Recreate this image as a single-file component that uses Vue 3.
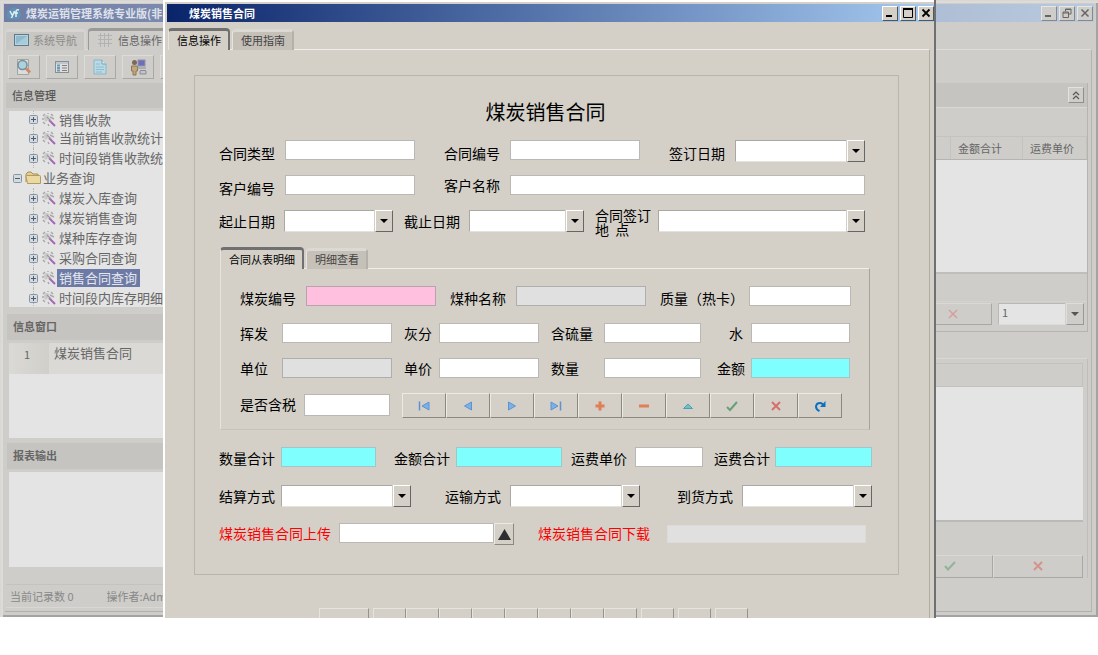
<script setup>
import { ref } from 'vue'

const tree = [
  { text: '销售收款' },
  { text: '当前销售收款统计' },
  { text: '时间段销售收款统' },
  { text: '业务查询', folder: true },
  { text: '煤炭入库查询' },
  { text: '煤炭销售查询' },
  { text: '煤种库存查询' },
  { text: '采购合同查询' },
  { text: '销售合同查询', selected: true },
  { text: '时间段内库存明细' },
]

const headRows = [
  { cls: 'r-type', fields: [
    { id: 'type', label: '合同类型' },
    { id: 'no', label: '合同编号' },
    { id: 'signDate', label: '签订日期', combo: true },
  ] },
  { cls: 'r-client', fields: [
    { id: 'clientNo', label: '客户编号' },
    { id: 'clientName', label: '客户名称' },
  ] },
  { cls: 'r-dates', fields: [
    { id: 'start', label: '起止日期', combo: true },
    { id: 'end', label: '截止日期', combo: true },
    { id: 'place', label: '合同签订\n地  点', combo: true },
  ] },
]

const detailRows = [
  { cls: 'r-coal', fields: [
    { id: 'coalNo', label: '煤炭编号', tone: 'pink' },
    { id: 'coalName', label: '煤种名称', tone: 'grey' },
    { id: 'heat', label: '质量（热卡）' },
  ] },
  { cls: 'r-four r-first', fields: [
    { id: 'volatile', label: '挥发' },
    { id: 'ash', label: '灰分' },
    { id: 'sulfur', label: '含硫量' },
    { id: 'water', label: '水' },
  ] },
  { cls: 'r-four', fields: [
    { id: 'unit', label: '单位', tone: 'grey' },
    { id: 'price', label: '单价' },
    { id: 'qty', label: '数量' },
    { id: 'amount', label: '金额', tone: 'cyan' },
  ] },
]

const footRows = [
  { cls: 'r-sum', fields: [
    { id: 'qtySum', label: '数量合计', tone: 'cyan' },
    { id: 'amountSum', label: '金额合计', tone: 'cyan' },
    { id: 'freight', label: '运费单价' },
    { id: 'freightSum', label: '运费合计', tone: 'cyan' },
  ] },
  { cls: 'r-mode', fields: [
    { id: 'settle', label: '结算方式', combo: true },
    { id: 'ship', label: '运输方式', combo: true },
    { id: 'arrive', label: '到货方式', combo: true },
  ] },
]

const values = ref({})

const nav = [
  { name: 'first', title: '首条' },
  { name: 'prev', title: '上一条' },
  { name: 'next', title: '下一条' },
  { name: 'last', title: '末条' },
  { name: 'add', title: '新增' },
  { name: 'remove', title: '删除' },
  { name: 'edit', title: '编辑' },
  { name: 'ok', title: '确定' },
  { name: 'cancel', title: '取消' },
  { name: 'refresh', title: '刷新' },
]
</script>

<template>
  <div class="stage">
    <div class="back">
      <header class="bar bar-dim">
        <svg class="logo" viewBox="0 0 16 14" width="16" height="14">
          <path d="M2 12Q0 10 1 7Q2 4 4 4Q6 0 10 2Q13 2 14 6Q16 8 14 11L12 13H4Z" fill="#5c93b4" />
          <path d="M4 5L6 9M8.500 5L5.500 12M13 4Q10 3 10 6V11M8.500 7H12" stroke="#e8eef2" stroke-width="1.500" fill="none" />
        </svg>
        <span class="bar-text">煤炭运销管理系统专业版(非</span>
        <span class="wbtns dim">
          <button type="button" class="wbtn" aria-label="最小化"><svg viewBox="0 0 10 10"><path d="M1 8H7" stroke="#666" stroke-width="2" /></svg></button>
          <button type="button" class="wbtn gapped" aria-label="还原"><svg viewBox="0 0 10 10"><path d="M3.500 3.500V1H9V6H7M1 4H6.500V9.500H1ZM1 5H6.500M3.500 1.500H9" stroke="#666" fill="none" /></svg></button>
          <button type="button" class="wbtn gapped" aria-label="关闭"><svg viewBox="0 0 10 10"><path d="M1.500 1.500L8.500 8.500M8.500 1.500L1.500 8.500" stroke="#666" stroke-width="1.500" /></svg></button>
        </span>
      </header>

      <nav class="tabs tabs-dim">
        <button type="button" class="tab off">
          <svg viewBox="0 0 15 12" width="15" height="12"><rect x=".5" y=".5" width="14" height="11" fill="#b9d3de" stroke="#5a7a8d" /><path d="M2 2H13V10H2Z" fill="#8fb9cd" /><path d="M2 10L13 2V10Z" fill="#a8cbd9" /></svg>
          系统导航
        </button>
        <button type="button" class="tab on">
          <svg viewBox="0 0 14 14" width="14" height="14"><path d="M2.500 0V14M6.500 0V14M10.500 0V14M0 2.500H14M0 6.500H14M0 10.500H14" stroke="#b3b2b0" stroke-width="1" fill="none" /></svg>
          信息操作
        </button>
      </nav>

      <div class="body">
        <aside class="side">
          <div class="tools">
            <button type="button" class="tool" aria-label="查找"><svg viewBox="0 0 18 18" width="18" height="18"><path d="M2.500 1.500H13.500V16.500H2.500Z" fill="#dadddd" stroke="#a2a5a6" /><circle cx="7.500" cy="7" r="4.500" fill="#a9d3df" stroke="#7d8c95" stroke-width="1.500" /><path d="M11 10.500L15 14.500" stroke="#cf8967" stroke-width="3" /></svg></button>
            <button type="button" class="tool" aria-label="列表"><svg viewBox="0 0 14 14" width="14" height="14"><rect x=".5" y="1.500" width="13" height="11" fill="#dedede" stroke="#8a8f93" /><path d="M1 3H13" stroke="#a0b0ba" /><path d="M2 5.500H5M2 8H5M2 10.500H5" stroke="#6d9ab5" stroke-width="2" /><path d="M7 5.500H12M7 8H12M7 10.500H12" stroke="#808080" /></svg></button>
            <button type="button" class="tool" aria-label="新建"><svg viewBox="0 0 14 16" width="14" height="16"><path d="M1 1H9L13 5V15H1Z" fill="#b9dbe7" stroke="#8fb4c4" /><path d="M9 1V5H13" fill="#dcebf0" stroke="#7d9fb0" /><path d="M3 5H7M3 8H11M3 10.500H11M3 13H9" stroke="#8fbccd" /></svg></button>
            <button type="button" class="tool" aria-label="用户"><svg viewBox="0 0 18 18" width="18" height="18"><circle cx="5.500" cy="4.500" r="2.500" fill="#7b6a58" /><path d="M2.500 8H8.500V13H7V17H4V13H2.500Z" fill="#c3a67a" stroke="#8b7657" /><rect x="9" y="2" width="7" height="6" fill="#6d70b8" stroke="#9093ad" /><path d="M8 10H17M11 12.500H17M11 13V16H17V13" stroke="#8a8d95" fill="#c2c4c8" /></svg></button>
            <button type="button" class="tool" aria-label="更多"></button>
          </div>
          <h2 class="head">信息管理</h2>
          <div class="tree">
            <ul>
              <li v-for="n in tree" :key="n.text" :class="{ folder: n.folder, selected: n.selected }">
                <svg class="pm" viewBox="0 0 9 9" width="9" height="9"><rect x=".5" y=".5" width="8" height="8" rx="1" fill="#d5dae0" stroke="#8795a5" /><path d="M2 4.500H7" stroke="#4c5c70" /><path v-if="!n.folder" d="M4.500 2V7" stroke="#4c5c70" /></svg>
                <svg v-if="n.folder" class="fold" viewBox="0 0 16 14" width="16" height="14"><path d="M1 11V3L3 1H6L8 3H13V5" fill="#e3cc91" stroke="#a88f56" /><path d="M2.500 12.500L1 5.500Q1 4.500 2 4.500H14.500Q15.500 4.500 15.500 5.500V12.500Z" fill="#ead9a0" stroke="#b39a5d" /></svg>
                <svg v-else class="gear" viewBox="0 0 14 14" width="14" height="14"><path d="M2 5Q2 2 5 2L8 3Q5 4 6 7L4 9Q2 8 2 5Z" fill="#c9c9c9" /><path d="M1 3L3 1M5 0H7M9 1L11 3M0 6H2M1 9L3 11M6 11L7 13M8 4L12 6" stroke="#a9a9a9" stroke-width="1.500" /><path d="M7 7L13 13" stroke="#a566b8" stroke-width="2" /><path d="M5 4L9 8" stroke="#9a9a9a" stroke-width="1.500" /></svg>
                <span>{{ n.text }}</span>
              </li>
            </ul>
          </div>
          <h2 class="head head-info">信息窗口</h2>
          <div class="pane">
            <table class="list"><tbody><tr><th scope="row">1</th><td>煤炭销售合同</td></tr></tbody></table>
          </div>
          <h2 class="head head-report">报表输出</h2>
          <div class="pane"></div>
          <footer class="status"><span>当前记录数 0</span><span>操作者:Adm</span></footer>
        </aside>

        <main class="work">
          <section class="panel">
            <div class="phead">
              <button type="button" class="fold-btn" aria-label="收起"><svg viewBox="0 0 8 9" width="8" height="9"><path d="M1 4L4 1L7 4M1 8L4 5L7 8" stroke="#555" fill="none" stroke-width="1.200" /></svg></button>
            </div>
            <table class="grid">
              <thead><tr><th></th><th class="c1">金额合计</th><th class="c2">运费单价</th></tr></thead>
              <tbody><tr><td></td><td></td><td></td></tr></tbody>
            </table>
            <div class="pager">
              <button type="button" class="flat" aria-label="取消"><svg viewBox="0 0 10 10" width="10" height="10"><path d="M1 1L9 9M9 1L1 9" stroke="#d3a09b" stroke-width="1.500" /></svg></button>
              <span class="combo combo-dim">
                <select aria-label="页码"><option>1</option></select>
                <span class="arrow"><svg viewBox="0 0 8 4" width="8" height="4"><path d="M0 0H8L4 4Z" fill="#555" /></svg></span>
              </span>
            </div>
          </section>
          <section class="panel2">
            <div class="p2head"></div>
            <div class="p2body"></div>
            <div class="p2btns">
              <button type="button" class="flat okb" aria-label="确定"><svg viewBox="0 0 12 10" width="12" height="10"><path d="M1 5L4 8.500L11 1" stroke="#91b39a" stroke-width="2" fill="none" /></svg></button>
              <button type="button" class="flat nob" aria-label="关闭"><svg viewBox="0 0 10 10" width="10" height="10"><path d="M1 1L9 9M9 1L1 9" stroke="#d5938c" stroke-width="2" /></svg></button>
            </div>
          </section>
        </main>
      </div>
    </div>

    <div class="dialog" role="dialog" aria-label="煤炭销售合同">
      <header class="bar">
        <span class="bar-text">煤炭销售合同</span>
        <span class="wbtns">
          <button type="button" class="wbtn" aria-label="最小化"><svg viewBox="0 0 10 10"><path d="M1 8H7" stroke="#000" stroke-width="2" /></svg></button>
          <button type="button" class="wbtn gapped" aria-label="最大化"><svg viewBox="0 0 10 10"><path d="M.5 1V9.500H9.500V1M0 1H10" stroke="#000" fill="none" /><path d="M0 1H10" stroke="#000" stroke-width="2" /></svg></button>
          <button type="button" class="wbtn gapped" aria-label="关闭"><svg viewBox="0 0 10 10"><path d="M1.500 1.500L8.500 8.500M8.500 1.500L1.500 8.500" stroke="#000" stroke-width="1.800" /></svg></button>
        </span>
      </header>
      <nav class="tabs">
        <button type="button" class="tab on">信息操作</button>
        <button type="button" class="tab off">使用指南</button>
      </nav>
      <div class="page">
        <form class="sheet" @submit.prevent>
          <h1>煤炭销售合同</h1>

          <div v-for="r in headRows" :key="r.cls" class="row" :class="r.cls">
            <div v-for="f in r.fields" :key="f.id" class="field">
              <label :for="f.id">{{ f.label }}</label>
              <span v-if="f.combo" class="combo">
                <select :id="f.id" v-model="values[f.id]"></select>
                <span class="arrow"><svg viewBox="0 0 8 4" width="8" height="4"><path d="M0 0H8L4 4Z" /></svg></span>
              </span>
              <input v-else :id="f.id" v-model="values[f.id]" type="text">
            </div>
          </div>

          <nav class="tabs subtabs">
            <button type="button" class="tab on">合同从表明细</button>
            <button type="button" class="tab off">明细查看</button>
          </nav>
          <section class="detail">
            <div v-for="r in detailRows" :key="r.cls" class="row" :class="r.cls">
              <div v-for="f in r.fields" :key="f.id" class="field" :class="'f-' + f.id">
                <label :for="f.id">{{ f.label }}</label>
                <input :id="f.id" v-model="values[f.id]" type="text" :class="f.tone">
              </div>
            </div>
            <div class="row r-tax">
              <div class="field">
                <label for="tax">是否含税</label>
                <input id="tax" v-model="values.tax" type="text">
              </div>
              <div class="navigator">
                <button v-for="b in nav" :key="b.name" type="button" :aria-label="b.title">
                  <svg viewBox="0 0 12 12" width="12" height="12">
                    <g v-if="b.name === 'first'"><path d="M1.500 1.500V10.500" stroke="#5d93cf" stroke-width="1.500" /><path d="M11 2V10L4 6Z" fill="#7db0e6" stroke="#5d93cf" /></g>
                    <path v-else-if="b.name === 'prev'" d="M9.500 2V10L2.500 6Z" fill="#7db0e6" stroke="#5d93cf" />
                    <path v-else-if="b.name === 'next'" d="M2.500 2V10L9.500 6Z" fill="#7db0e6" stroke="#5d93cf" />
                    <g v-else-if="b.name === 'last'"><path d="M10.500 1.500V10.500" stroke="#5d93cf" stroke-width="1.500" /><path d="M1 2V10L8 6Z" fill="#7db0e6" stroke="#5d93cf" /></g>
                    <path v-else-if="b.name === 'add'" d="M6 1.500V10.500M1.500 6H10.500" stroke="#e07f55" stroke-width="3" />
                    <path v-else-if="b.name === 'remove'" d="M1 6H11" stroke="#e07f55" stroke-width="3" />
                    <path v-else-if="b.name === 'edit'" d="M1.500 8.500L6 4L10.500 8.500Z" fill="#6fc0cc" stroke="#4f9faf" />
                    <path v-else-if="b.name === 'ok'" d="M1 7L4 10L11 2" stroke="#6a9f76" stroke-width="2" fill="none" />
                    <path v-else-if="b.name === 'cancel'" d="M2 2L10 10M10 2L2 10" stroke="#d4706a" stroke-width="2" />
                    <g v-else><path d="M5.500 11Q2 9.500 2 6.500Q2.500 3 6 3Q8 3 9.500 5" stroke="#0a70bf" stroke-width="2" fill="none" /><path d="M11.500 1V7H6Z" fill="#0a70bf" /></g>
                  </svg>
                </button>
              </div>
            </div>
          </section>

          <div v-for="r in footRows" :key="r.cls" class="row" :class="r.cls">
            <div v-for="f in r.fields" :key="f.id" class="field">
              <label :for="f.id">{{ f.label }}</label>
              <span v-if="f.combo" class="combo">
                <select :id="f.id" v-model="values[f.id]"></select>
                <span class="arrow"><svg viewBox="0 0 8 4" width="8" height="4"><path d="M0 0H8L4 4Z" /></svg></span>
              </span>
              <input v-else :id="f.id" v-model="values[f.id]" type="text" :class="f.tone">
            </div>
          </div>

          <div class="row r-file">
            <div class="field">
              <label for="upload">煤炭销售合同上传</label>
              <input id="upload" v-model="values.upload" type="text">
              <button type="button" class="up" aria-label="选择文件"><svg viewBox="0 0 13 11" width="13" height="11"><path d="M6.500 0L13 11H0Z" fill="#2e2e2e" /></svg></button>
            </div>
            <div class="field">
              <label for="download">煤炭销售合同下载</label>
              <input id="download" v-model="values.download" type="text" class="plain">
            </div>
          </div>
        </form>
        <div class="bottom">
          <button v-for="i in 12" :key="i" type="button" :aria-label="'操作' + i"></button>
        </div>
      </div>
    </div>
  </div>
</template>

<style>
body {
  background: #fff;
}
</style>

<style scoped>
* {
  box-sizing: border-box;
}
.stage {
  position: relative;
  overflow: hidden;
  padding-bottom: 1px;
  min-width: 900px;
  font: 11px/16px "Noto Sans CJK SC", "Noto Sans", sans-serif;
  color: #000;
}
button,
input,
select {
  font: inherit;
  color: inherit;
  margin: 0;
  padding: 0;
  border-radius: 0;
  appearance: none;
}
h1,
h2,
ul {
  margin: 0;
  padding: 0;
  list-style: none;
}
svg {
  display: block;
  flex: none;
}

/* window frames */
.back {
  padding: 4px 4px 5px;
  background: #cecdc9;
  box-shadow: inset 1px 1px #d8d7d4, inset 3px 3px #dcdbd8, inset -2px -2px #a3a3a3;
  color: #666;
}
.bar {
  display: flex;
  align-items: center;
  height: 18px;
  background: linear-gradient(90deg, #0a246a, #a6caf0);
  color: #fff;
  font-weight: 700;
}
.bar-dim {
  background: linear-gradient(90deg, #707ea5, #b9c9de);
  color: #dfe2ea;
}
.logo {
  margin: 0 4px 0 2px;
}
.dialog .bar-text {
  margin-left: 22px;
}
.wbtns {
  display: flex;
  margin-left: auto;
  margin-right: 1px;
}
.dialog .wbtns {
  margin-right: 0;
}
.wbtn {
  display: grid;
  place-items: center;
  width: 16px;
  height: 15px;
  background: #d4d0c8;
  border: 1px solid;
  border-color: #fff #555 #555 #fff;
}
.wbtn svg {
  width: 10px;
  height: 10px;
}
.dim .wbtn {
  background: #cecdc9;
  border-color: #e6e6e6 #888 #888 #e6e6e6;
}
.gapped {
  margin-left: 2px;
}

/* tabs */
.tabs {
  display: flex;
  align-items: flex-end;
  gap: 2px;
  height: 22px;
  margin: 6px 0 -1px 1px;
  position: relative;
}
.tab {
  display: flex;
  align-items: center;
  height: 22px;
  border: 1px solid #e6e4de;
  border-radius: 4px 4px 0 0;
  border-bottom: 0;
  white-space: nowrap;
}
.tab.on {
  background: #d4d0c8;
  border-top: 3px solid #707070;
  border-right: 2px solid #707070;
  padding: 0 7px 2px 8px;
}
.tab.off {
  background: #c6c1b8;
  color: #444;
  height: 21px;
  border-top: 3px solid #dbd9d3;
  border-right: 2px solid #b4b1aa;
  padding: 0 7px 2px 8px;
}
.tabs-dim .tab {
  gap: 4px;
  color: #666;
  background: #cecdc9;
}
.tabs-dim .tab.off {
  background: #c8c7c3;
  color: #8d8d8b;
  border-color: #d5d4d1;
}
.tabs-dim .tab.on {
  gap: 6px;
  border-color: #9a9a99;
  padding-left: 9px;
}

/* background body */
.body {
  display: flex;
  margin-left: 1px;
  border-top: 1px solid #dddcd9;
  border-right: 1px solid #b5b4b1;
  border-bottom: 1px solid #b0afad;
  margin-right: 2px;
  padding-bottom: 3px;
}
.side {
  flex: none;
  width: 200px;
  padding-left: 1px;
}
.tools {
  display: flex;
  gap: 6px;
  margin: 5px 0 4px 2px;
}
.tool {
  display: grid;
  place-items: center;
  width: 32px;
  height: 24px;
  background: #cecdc9;
  border: 1px solid;
  border-color: #dddcd9 #a9a8a6 #a9a8a6 #dddcd9;
}
.head {
  height: 25px;
  padding-left: 6px;
  background: #c6c4c0;
  font-size: 11px;
  font-weight: 500;
  line-height: 25px;
  color: #555;
}
.tree {
  margin: 3px 0 7px 3px;
  background: #e4e4e4;
  overflow: hidden;
  font-size: 13px;
}
.tree ul {
  margin-bottom: -1px;
}
.tree li {
  position: relative;
  display: flex;
  align-items: center;
  height: 20px;
  padding-left: 20px;
  white-space: nowrap;
}
.tree li:first-child {
  height: 17px;
}
.tree li:first-child span {
  line-height: 15px;
}
.tree li::before {
  content: "";
  position: absolute;
  left: 24px;
  top: 0;
  bottom: 0;
  border-left: 1px dotted #b5b5b5;
}
.tree .folder {
  padding-left: 4px;
}
.tree .folder::before {
  display: none;
}
.pm {
  position: relative;
}
.gear {
  margin: 0 1px 0 4px;
}
.fold {
  margin: 0 0 0 3px;
}
.tree span {
  padding: 0 3px 0 2px;
  line-height: 18px;
}
.tree .selected span {
  background: #6c7aa5;
  color: #e6e8ee;
}
.head-info,
.head-report {
  height: 26px;
  font-weight: 700;
  color: #666;
  margin-left: 1px;
}
.pane {
  height: 95px;
  margin: 3px 0 5px 3px;
  background: #e4e4e4;
}
.list {
  width: 100%;
  border-collapse: collapse;
  background: #dad9d5;
}
.list th {
  width: 40px;
  height: 31px;
  padding: 0 4px 10px 0;
  background: linear-gradient(90deg, #dad9d5, #d0cfca);
  font-weight: 400;
}
.list td {
  padding: 0 0 11px 5px;
  font-size: 13px;
}
.status {
  display: flex;
  gap: 33px;
  height: 24px;
  margin-top: 17px;
  padding-left: 4px;
  border-top: 1px solid #c4c3c0;
  border-bottom: 1px solid #d8d7d4;
  line-height: 22px;
  color: #888;
  white-space: nowrap;
}
.work {
  flex: 1;
  min-width: 0;
  padding: 33px 3px 0 0;
}
.panel {
  border-right: 1px solid #b5b4b1;
  border-bottom: 1px solid #b5b4b1;
}
.phead {
  display: flex;
  justify-content: flex-end;
  align-items: center;
  height: 25px;
  padding-right: 3px;
  background: #c6c4c0;
  border-bottom: 1px solid #dad9d6;
}
.fold-btn {
  display: grid;
  place-items: center;
  width: 16px;
  height: 16px;
  background: #cecdc9;
  border: 1px solid;
  border-color: #e2e2e0 #8f8f8e #8f8f8e #e2e2e0;
}
.grid {
  width: 100%;
  margin-top: 28px;
  border-collapse: collapse;
  table-layout: fixed;
  border-bottom: 2px solid #bfbebc;
}
.grid th {
  height: 23px;
  padding: 0 0 1px 7px;
  font-weight: 400;
  text-align: left;
  border: 1px solid #c4c3c0;
  border-bottom-color: #b5b4b1;
}
.c1 {
  width: 72px;
}
.c2 {
  width: 64px;
}
.grid td {
  height: 113px;
  background: #e4e4e4;
}
.pager {
  display: flex;
  align-items: flex-start;
  gap: 6px;
  margin-top: 27px;
  padding: 1px 3px 6px 0;
  border-top: 1px solid #d3d2cf;
}
.flat {
  display: grid;
  place-items: center;
  height: 22px;
  background: #cecdc9;
  border: 1px solid;
  border-color: #dad9d6 #a9a8a6 #a9a8a6 #dad9d6;
}
.pager .flat {
  width: 79px;
  margin-left: auto;
}
.combo {
  position: relative;
  display: flex;
  flex: 1;
  min-width: 0;
}
.combo select {
  width: 100%;
  height: 22px;
  border: 1px solid;
  border-color: #aaa8a2 #e4e2dd #e4e2dd #aaa8a2;
  background: #fff;
}
.arrow {
  position: absolute;
  top: 0;
  right: 0;
  display: grid;
  place-items: center;
  width: 18px;
  height: 22px;
  background: #d4d0c8;
  border: 1px solid;
  border-color: #fff #666 #666 #fff;
  box-shadow: -1px 0 #d4d0c8;
  pointer-events: none;
}
.combo.combo-dim {
  flex: 0 0 86px;
}
.combo-dim select {
  background: #e4e4e4;
  border-color: #b9b8b5 #dcdbd8 #dcdbd8 #b9b8b5;
  padding: 0 0 3px 3px;
}
.combo-dim .arrow {
  background: #cecdc9;
  border-color: #ddd #999 #999 #ddd;
}
.panel2 {
  margin-top: 26px;
  padding: 4px 4px 0 0;
  border-top: 1px solid #d8d7d4;
  border-right: 1px solid #bfbebc;
}
.p2head {
  height: 24px;
  border: 1px solid #c2c1be;
}
.p2body {
  height: 135px;
  background: #e4e4e4;
  border-bottom: 2px solid #bab9b7;
}
.p2btns {
  display: flex;
  justify-content: flex-end;
  margin-top: 33px;
}
.p2btns .flat {
  height: 23px;
}
.okb {
  width: 86px;
}
.nob {
  width: 90px;
}

/* dialog */
.dialog {
  position: absolute;
  top: 0;
  right: 162px;
  bottom: 0;
  left: 163px;
  display: flex;
  flex-direction: column;
  overflow: hidden;
  padding: 4px 0 0 4px;
  background: #d4d0c8;
  border-right: 2px solid #6f7072;
  box-shadow: inset 2px 2px #fff;
}
.dialog > .tabs {
  z-index: 1;
}
.page {
  flex: 1;
  margin: 0 4px 0 1px;
  padding: 25px 30px 0 26px;
  border-top: 1px solid #efeeea;
  border-right: 1px solid #b0ada6;
}
.sheet {
  padding: 22px 26px 29px 24px;
  border: 1px solid #b8b5ae;
}
.sheet h1 {
  margin-bottom: 14px;
  font-size: 20px;
  font-weight: 400;
  line-height: 28px;
  text-align: center;
}
.row {
  display: grid;
  min-height: 21px;
}
.field {
  display: flex;
  align-items: flex-start;
  min-width: 0;
}
.field label {
  flex: none;
  width: var(--l, 66px);
  margin-top: var(--t, 6px);
  font-size: 14px;
  font-weight: 400;
  line-height: 14px;
  white-space: pre;
}
.field input {
  flex: 1;
  min-width: 0;
  height: 20px;
  padding: 0 3px;
  border: 1px solid #bab8b4;
  background: #fff;
}
.field .pink {
  background: #ffc0e0;
  border-color: #b9a3ae;
}
.field .grey {
  background: #e0e0e0;
  border-color: #aeaeae;
}
.field .cyan {
  background: #80ffff;
  border-color: #a3c5c5;
}
.field .plain {
  height: 18px;
  margin-top: 2px;
  background: #e0e0e0;
  border-color: #dcdbd8;
}
.r-type {
  grid-template-columns: 1fr 1fr 1fr;
  gap: 29px;
  margin-right: 7px;
}
.r-client {
  grid-template-columns: 196fr 421fr;
  gap: 29px;
  margin: 13px 7px 12px 0;
}
.r-client .field:last-child {
  --t: 3px;
}
.r-dates {
  --l: 65px;
  grid-template-columns: 174fr 180fr 270fr;
  gap: 11px;
  margin-right: 7px;
}
.r-dates .combo {
  margin-top: 2px;
}
.r-dates .field:last-child {
  --l: 63px;
  --t: 0;
}
.subtabs {
  margin: 11px 0 -1px 1px;
}
.detail {
  margin: 0 2px 0 1px;
  padding: 17px 18px 11px 19px;
  border: 1px solid;
  border-color: #efeeea #a5a29c #c6c3bb #e4e2dd;
}
.r-coal {
  --t: 5px;
  grid-template-columns: 196fr 196fr 191fr;
  gap: 14px;
}
.f-heat {
  --l: 89px;
}
.r-four {
  --t: 3px;
  grid-template-columns: 152fr 135fr 150fr 137fr;
  gap: 12px;
  margin: 14px 1px 0 0;
}
.r-first {
  margin-top: 16px;
}
.r-four .field {
  --l: 42px;
}
.r-four .field:nth-child(2) {
  --l: 35px;
}
.r-four .field:nth-child(3) {
  --l: 53px;
}
.r-four .field:nth-child(4) {
  --l: 34px;
  padding-left: 4px;
}
.f-water label {
  padding-left: 12px;
}
.r-tax {
  --t: 4px;
  grid-template-columns: 150fr 440px;
  gap: 12px;
  margin: 14px 9px 0 0;
}
.r-tax .field {
  --l: 64px;
}
.r-tax input {
  height: 22px;
  margin-top: 1px;
}
.navigator {
  display: flex;
}
.navigator button {
  display: grid;
  place-items: center;
  flex: 1;
  height: 25px;
  background: #d4d0c8;
  border: 1px solid;
  border-color: #eceae5 #8b8882 #8b8882 #eceae5;
}
.r-sum {
  --t: 4px;
  grid-template-columns: 157fr 186fr 141fr 169fr;
  margin-top: 17px;
}
.r-sum .field {
  --l: 62px;
}
.r-sum .field:nth-child(2) {
  padding-left: 18px;
}
.r-sum .field:nth-child(3) {
  --l: 64px;
  padding-left: 9px;
}
.r-sum .field:nth-child(4) {
  --l: 61px;
  padding-left: 11px;
}
.r-mode {
  --l: 65px;
  --t: 4px;
  grid-template-columns: 192fr 229fr 232fr;
  margin: 17px 0 16px;
}
.r-mode .field:first-child {
  --l: 62px;
}
.r-mode .field:nth-child(2) {
  padding-left: 34px;
}
.r-mode .field:nth-child(3) {
  padding-left: 37px;
}
.r-file {
  --t: 3px;
  grid-template-columns: 295fr 328fr;
  gap: 24px;
  margin-right: 6px;
  color: #f00;
}
.r-file .field {
  --l: 120px;
}
.r-file .field:last-child {
  --l: 129px;
}
.up {
  display: grid;
  place-items: center;
  width: 20px;
  height: 22px;
  background: #d4d0c8;
  border: 1px solid;
  border-color: #eceae5 #8b8882 #8b8882 #eceae5;
}
.bottom {
  display: flex;
  justify-content: center;
  margin: 33px 27px 0 0;
}
.bottom button {
  width: 33px;
  height: 10px;
  background: #d4d0c8;
  border: 1px solid;
  border-color: #e6e4de #96938d transparent #e6e4de;
  border-bottom: 0;
}
.bottom button:first-child {
  width: 50px;
  margin-right: 4px;
}
.bottom button:nth-child(n + 10) {
  margin-left: 4px;
}
</style>
